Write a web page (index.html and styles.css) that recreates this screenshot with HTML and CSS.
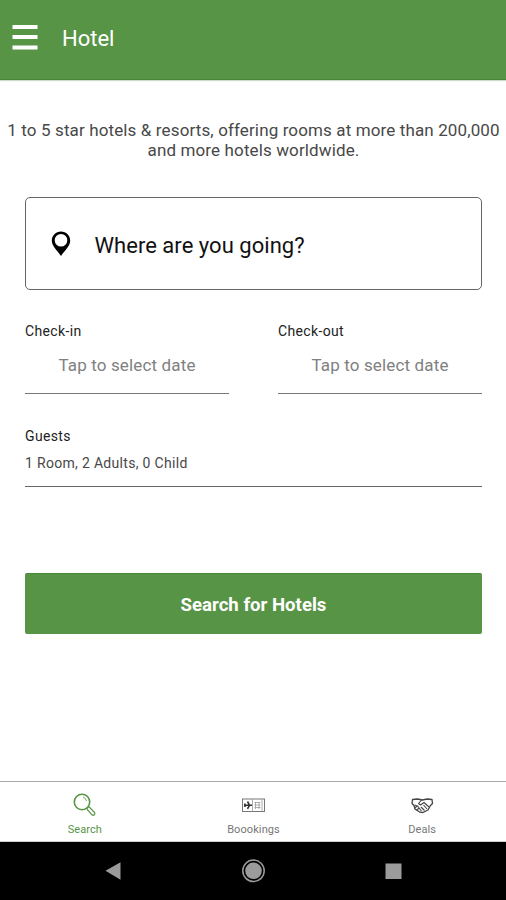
FILE: index.html
```html
<!DOCTYPE html>
<html lang="en">
<head>
<meta charset="utf-8">
<title>Hotel</title>
<link rel="stylesheet" href="styles.css">
</head>
<body>
<header class="bar">
  <svg class="menu" width="26" height="26" viewBox="0 0 26 26"><path d="M.5 0h25v4H.5zM.5 10h25v4H.5zM.5 20.500h25v4H.5z" fill="#fff"/></svg>
  <h1 class="title">Hotel</h1>
</header>
<main class="content">
  <p class="intro">1 to 5 star hotels &amp; resorts, offering rooms at more than 200,000<br>and more hotels worldwide.</p>
  <div class="where">
    <svg width="20" height="26" viewBox="0 0 20 26"><path fill="#000" fill-rule="evenodd" d="M10 .5C4.800.5.800 4.500.800 9.500c0 5.500 5 9.500 9.200 15.500 4.200-6 9.200-10 9.200-15.500C19.200 4.500 15.200.5 10 .5zM10 3a6.300 6.300 0 1 1 0 12.600A6.300 6.300 0 0 1 10 3z"/></svg>
    <span>Where are you going?</span>
  </div>
  <div class="dates">
    <div class="date"><label>Check-in</label><div class="value">Tap to select date</div></div>
    <div class="date"><label>Check-out</label><div class="value">Tap to select date</div></div>
  </div>
  <div class="guests"><label>Guests</label><div class="rooms">1 Room, 2 Adults, 0 Child</div></div>
  <button class="search">Search for Hotels</button>
</main>
<nav class="tabs">
  <div class="tab active">
    <svg width="24" height="24" viewBox="0 0 24 24" fill="none" stroke="currentColor"><circle cx="10" cy="9" r="7.700" stroke-width="1.600"/><path d="M11 4a5 5 0 0 1 3.500 4" stroke-width=".8"/><path d="M15 15.300l1.800-1.800 5.700 6c1.200 1.600-1.100 3.600-2.500 2.300l-4.800-5.300z" stroke-width="1.200"/></svg>
    <span>Search</span>
  </div>
  <div class="tab bookings">
    <svg width="24" height="24" viewBox="0 0 24 24" fill="none" stroke="#777"><rect x="1.500" y="6" width="22" height="12.500" stroke-width="1"/><path d="M11.500 6v12.500M21 6v12.500" stroke="#999" stroke-width=".8"/><path d="M3 12.200h8M6.500 8.500l2 3.700-2 3.700M4 10.500v3.500" stroke="#333" stroke-width="1.600"/><path d="M13.500 9.500h6M13.500 12h6M13.500 14.500h6M14.500 9v7M18 9v7" stroke="#999" stroke-width=".8"/></svg>
    <span>Boookings</span>
  </div>
  <div class="tab deals">
    <svg width="24" height="24" viewBox="0 0 24 24" fill="none" stroke="#444" stroke-linejoin="round"><path d="M7.500 6l-5 .5-.5 4 2 2 1 3.500 5 3.200 3 .3 5-2.500 2.500-4.500 2-2-.5-4-5-.5-4.500 1z" stroke-width="1.300"/><path d="M12 6.500L8.500 10.500l2 1.500 3.500-2.500 5 4.500M13.500 12l3.500 4M11 14l3.500 3.500M4.500 12l3 1 4 5M4.500 15l3-2M6.500 17l3-2" stroke-width="1.100"/></svg>
    <span>Deals</span>
  </div>
</nav>
<footer class="system">
  <svg width="506" height="58" viewBox="0 0 506 58"><g fill="#9b9b9b"><path d="M105.500 28.800l15-8.500v17.500z"/><circle cx="253.500" cy="28.800" r="8.300"/><rect x="385.500" y="21.500" width="16" height="15.500"/></g><circle cx="253.500" cy="28.800" r="10.700" fill="none" stroke="#9b9b9b" stroke-width="1.500"/></svg>
</footer>
</body>
</html>
```
FILE: styles.css
```css
* { box-sizing: border-box; }
body { margin: 0; width: 506px; height: 900px; display: flex; flex-direction: column; overflow: hidden; background: #fff; font-family: Roboto, "Liberation Sans", sans-serif; }
svg { display: block; flex: none; }
.bar { height: 80px; flex: none; background: #589446; border-bottom: 1px solid #468735; display: flex; align-items: flex-start; padding: 25px 12px; color: #fff; box-shadow: 0 1px 1px #ccdcc8; }
.title { margin: 1px 0 0 24px; font-size: 22px; font-weight: 400; line-height: 26px; }
.content { flex: 1; display: flex; flex-direction: column; padding: 40px 24px 0 25px; }
.intro { margin: 0 -24px; height: 40px; text-align: center; white-space: nowrap; font-size: 17px; line-height: 20px; letter-spacing: .125px; color: #484848; }
.where { height: 93px; margin-top: 37px; border: 1px solid #666; border-radius: 5px; display: flex; align-items: center; padding-left: 25px; gap: 23.500px; font-size: 22px; color: #111; }
.where span { margin-top: 3px; letter-spacing: .03px; }
.dates { display: flex; gap: 49px; margin-top: 33px; }
.date { flex: 1; height: 71px; border-bottom: 1px solid #777; }
label { display: block; font-size: 14px; line-height: 17px; letter-spacing: .35px; color: #222; }
.value { text-align: center; font-size: 17px; line-height: 20px; letter-spacing: .15px; margin-top: 15px; color: #808080; }
.guests { height: 59px; margin-top: 34px; border-bottom: 1px solid #666; }
.rooms { font-size: 14px; line-height: 18px; letter-spacing: .31px; margin-top: 9px; color: #484848; }
.search { height: 61px; margin-top: 86px; padding: 2px 0 0; border: 0; border-top: 1px solid #468735; border-radius: 2px; background: #589446; color: #fff; font: 700 18.600px Roboto, sans-serif; }
.tabs { height: 61px; flex: none; border-top: 1px solid #aaa; border-bottom: 1px solid #ccc; display: flex; }
.tab { flex: 1; display: flex; flex-direction: column; align-items: center; padding-top: 11px; font-size: 11px; line-height: 13px; letter-spacing: .1px; color: #777; }
.tab span { margin: 6px 0 0 1px; }
.tab.active { color: #589446; }
.system { height: 58px; flex: none; background: #000; }
```
